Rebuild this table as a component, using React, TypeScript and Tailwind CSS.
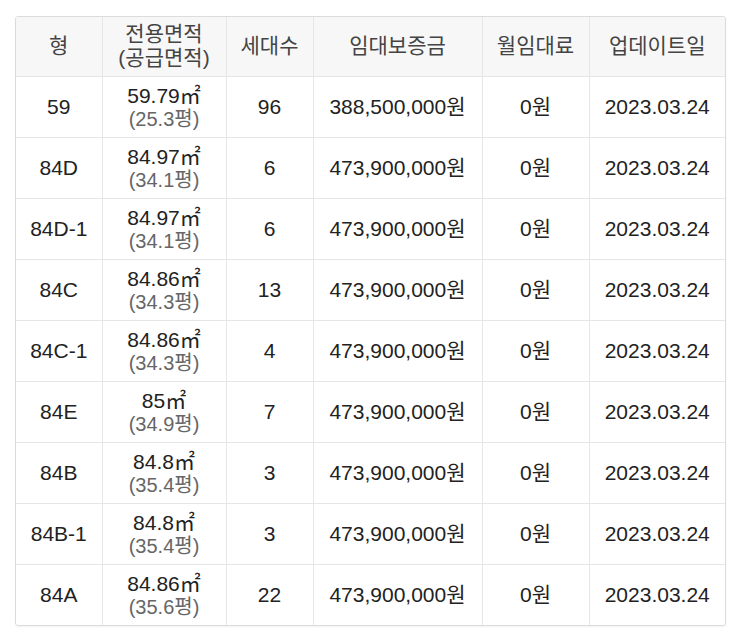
import React from 'react';

interface Unit {
  type: string;
  area: string;
  pyeong: string;
  households: number;
  deposit: string;
  rent: string;
  updated: string;
}

const units: Unit[] = [
  { type: '59', area: '59.79', pyeong: '25.3', households: 96, deposit: '388,500,000', rent: '0', updated: '2023.03.24' },
  { type: '84D', area: '84.97', pyeong: '34.1', households: 6, deposit: '473,900,000', rent: '0', updated: '2023.03.24' },
  { type: '84D-1', area: '84.97', pyeong: '34.1', households: 6, deposit: '473,900,000', rent: '0', updated: '2023.03.24' },
  { type: '84C', area: '84.86', pyeong: '34.3', households: 13, deposit: '473,900,000', rent: '0', updated: '2023.03.24' },
  { type: '84C-1', area: '84.86', pyeong: '34.3', households: 4, deposit: '473,900,000', rent: '0', updated: '2023.03.24' },
  { type: '84E', area: '85', pyeong: '34.9', households: 7, deposit: '473,900,000', rent: '0', updated: '2023.03.24' },
  { type: '84B', area: '84.8', pyeong: '35.4', households: 3, deposit: '473,900,000', rent: '0', updated: '2023.03.24' },
  { type: '84B-1', area: '84.8', pyeong: '35.4', households: 3, deposit: '473,900,000', rent: '0', updated: '2023.03.24' },
  { type: '84A', area: '84.86', pyeong: '35.6', households: 22, deposit: '473,900,000', rent: '0', updated: '2023.03.24' },
];

const th = 'h-[59px] p-0 border-r border-b border-[#e6e6e6] font-normal text-[#444] text-[21px] leading-[24px] text-center align-middle';
const td = 'h-[61px] p-0 border-r border-b border-[#e6e6e6] text-[#222] text-[21px] leading-[24px] text-center align-middle';

export default function App() {
  return (
    <div className="bg-white min-h-[641px] pl-[15px] pt-[16px] font-['Liberation_Sans','Noto_Sans_CJK_KR',sans-serif]">
      <div className="w-[711px] border border-[#dcdcdc] rounded-[3px] overflow-hidden shadow-[0_1px_2px_rgba(0,0,0,0.06)]">
        <table className="w-full table-fixed border-collapse">
          <colgroup>
            <col className="w-[86px]" />
            <col className="w-[124px]" />
            <col className="w-[87px]" />
            <col className="w-[169px]" />
            <col className="w-[107px]" />
            <col />
          </colgroup>
          <thead>
            <tr className="bg-[#f7f7f7]">
              <th className={th}>형</th>
              <th className={th}>
                전용면적
                <br />
                (공급면적)
              </th>
              <th className={th}>세대수</th>
              <th className={th}>임대보증금</th>
              <th className={th}>월임대료</th>
              <th className={th + ' border-r-0'}>업데이트일</th>
            </tr>
          </thead>
          <tbody>
            {units.map((u, i) => {
              const last = i === units.length - 1 ? ' border-b-0' : '';
              return (
                <tr key={u.type}>
                  <td className={td + last}>{u.type}</td>
                  <td className={td + last}>
                    <div>{u.area}㎡</div>
                    <div className="text-[20px] leading-[22px] text-[#666]">({u.pyeong}평)</div>
                  </td>
                  <td className={td + last}>{u.households}</td>
                  <td className={td + last}>{u.deposit}원</td>
                  <td className={td + last}>{u.rent}원</td>
                  <td className={td + last + ' border-r-0'}>{u.updated}</td>
                </tr>
              );
            })}
          </tbody>
        </table>
      </div>
    </div>
  );
}
